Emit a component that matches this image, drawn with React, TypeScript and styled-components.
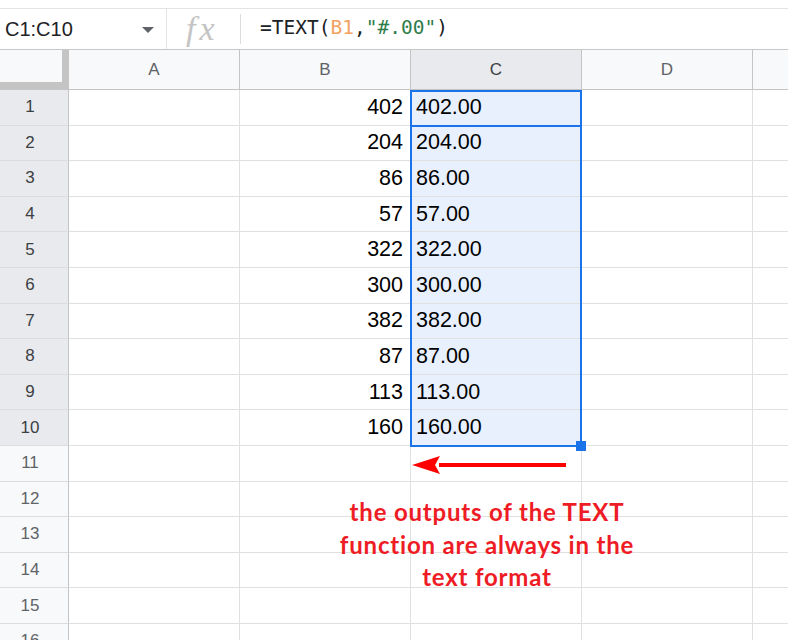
import React from 'react';
import styled, { createGlobalStyle } from 'styled-components';

const GlobalStyle = createGlobalStyle`
    html, body {
        margin: 0;
        padding: 0;
        background: #ffffff;
    }
    * {
        box-sizing: border-box;
    }
`;

const COL_W = 171;
const HEAD_W = 69;
const HEAD_H = 40;
const ROW_H = 35.6;

const Page = styled.div`
    width: 788px;
    height: 640px;
    overflow: hidden;
    display: flex;
    flex-direction: column;
    font-family: "Liberation Sans", Arial, sans-serif;
    color: #202124;
`;

const TopStrip = styled.div`
    height: 9px;
    flex: none;
    border-bottom: 1px solid #e3e3e3;
`;

const FormulaBar = styled.div`
    height: 41px;
    flex: none;
    display: flex;
    align-items: center;
    border-bottom: 1px solid #c7c7c7;
`;

const NameBox = styled.div`
    width: 167px;
    height: 100%;
    display: flex;
    align-items: center;
    justify-content: space-between;
    padding: 0 12px 0 5px;
    border-right: 1px solid #e3e3e3;
    font-size: 20px;
    color: #202124;
`;

const Caret = styled.span`
    width: 0;
    height: 0;
    border-left: 6px solid transparent;
    border-right: 6px solid transparent;
    border-top: 6px solid #5f6368;
    margin-top: 2px;
`;

const FxBox = styled.div`
    width: 74px;
    height: 30px;
    display: flex;
    align-items: center;
    padding-left: 19px;
    border-right: 1px solid #dadce0;
    font-family: "Liberation Serif", "Times New Roman", serif;
    font-style: italic;
    font-size: 34px;
    color: #c4c4c4;
    letter-spacing: 4px;
`;

const FormulaText = styled.div`
    padding-left: 19px;
    font-family: "DejaVu Sans Mono", monospace;
    font-size: 19.5px;
    color: #202124;
    white-space: pre;
    margin-top: -3px;
`;

const Tok = styled.span<{ $kind?: 'ref' | 'str' }>`
    color: ${(p) => (p.$kind === 'ref' ? '#f2a25f' : p.$kind === 'str' ? '#2f7d4a' : '#202124')};
`;

const Sheet = styled.div`
    position: relative;
    flex: none;
    display: grid;
    grid-template-columns: ${HEAD_W}px repeat(5, ${COL_W}px);
    grid-template-rows: ${HEAD_H}px repeat(16, ${ROW_H}px);
`;

const Corner = styled.div`
    background: #f8f9fa;
    border-right: 7px solid #c4c4c4;
    border-bottom: 8px solid #c4c4c4;
`;

const ColHeader = styled.div<{ $selected?: boolean }>`
    display: flex;
    align-items: center;
    justify-content: center;
    background: ${(p) => (p.$selected ? '#e8eaed' : '#f8f9fa')};
    border-right: 1px solid #c4c4c4;
    border-bottom: 1px solid #c4c4c4;
    font-size: 17px;
    color: ${(p) => (p.$selected ? '#3c4043' : '#5f6368')};
`;

const RowHeader = styled.div<{ $selected?: boolean }>`
    display: flex;
    align-items: center;
    justify-content: center;
    padding-right: 8px;
    background: ${(p) => (p.$selected ? '#e8eaed' : '#f8f9fa')};
    border-right: 1px solid #c4c4c4;
    border-bottom: 1px solid #dcdcdc;
    font-size: 17px;
    color: ${(p) => (p.$selected ? '#3c4043' : '#5f6368')};
`;

const Cell = styled.div<{ $align?: 'left' | 'right'; $selected?: boolean }>`
    display: flex;
    align-items: center;
    justify-content: ${(p) => (p.$align === 'right' ? 'flex-end' : 'flex-start')};
    padding: 0 7px 0 5px;
    background: ${(p) => (p.$selected ? '#e8f0fe' : '#ffffff')};
    border-right: 1px solid #e0e0e0;
    border-bottom: 1px solid #e0e0e0;
    font-size: 21.5px;
    color: #000000;
`;

const RangeBox = styled.div`
    position: absolute;
    left: ${HEAD_W + COL_W * 2 - 1}px;
    top: ${HEAD_H}px;
    width: ${COL_W + 1}px;
    height: ${ROW_H * 10 + 1}px;
    border: 2px solid #1a73e8;
    pointer-events: none;
`;

const ActiveCell = styled.div`
    height: ${ROW_H + 1}px;
    margin: -2px;
    border: 2px solid #1a73e8;
`;

const FillHandle = styled.div`
    position: absolute;
    right: -6px;
    bottom: -6px;
    width: 10px;
    height: 10px;
    background: #1a73e8;
`;

const Arrow = styled.svg`
    position: absolute;
    left: 409px;
    top: 403px;
    pointer-events: none;
`;

const Note = styled.div`
    position: absolute;
    left: 287px;
    top: 446px;
    width: 400px;
    text-align: center;
    font-family: Lato, "Liberation Sans", sans-serif;
    font-weight: 700;
    font-size: 24px;
    letter-spacing: 0.8px;
    line-height: 32.5px;
    color: #ee1c25;
`;

// the fifth column sits past the right edge, its letter is never visible
const columns = ['A', 'B', 'C', 'D', ''];
const values = [402, 204, 86, 57, 322, 300, 382, 87, 113, 160];

export default function App() {
    const rows = Array.from({ length: 16 }, (_, i) => i + 1);

    return (
        <Page>
            <GlobalStyle />
            <TopStrip />
            <FormulaBar>
                <NameBox>
                    <span>C1:C10</span>
                    <Caret />
                </NameBox>
                <FxBox>fx</FxBox>
                <FormulaText>
                    <Tok>=TEXT(</Tok>
                    <Tok $kind="ref">B1</Tok>
                    <Tok>,</Tok>
                    <Tok $kind="str">"#.00"</Tok>
                    <Tok>)</Tok>
                </FormulaText>
            </FormulaBar>
            <Sheet>
                <Corner />
                {columns.map((c, i) => (
                    <ColHeader key={i} $selected={c === 'C'}>{c}</ColHeader>
                ))}
                {rows.map((r) => {
                    const v = values[r - 1];
                    const inRange = r <= 10;
                    return (
                        <React.Fragment key={r}>
                            <RowHeader $selected={inRange}>{r}</RowHeader>
                            <Cell />
                            <Cell $align="right">{v}</Cell>
                            <Cell $selected={inRange}>{v !== undefined ? v.toFixed(2) : ''}</Cell>
                            <Cell />
                            <Cell />
                        </React.Fragment>
                    );
                })}
                <RangeBox>
                    <ActiveCell />
                    <FillHandle />
                </RangeBox>
                <Arrow width="162" height="24" viewBox="0 0 162 24">
                    <path d="M30 10 L157 10 L157 14 L30 14 Z" fill="#ff0000" />
                    <path d="M3 12 L31 3 L26 12 L31 21 Z" fill="#ff0000" />
                </Arrow>
                <Note>
                    the outputs of the TEXT
                    <br />
                    function are always in the
                    <br />
                    text format
                </Note>
            </Sheet>
        </Page>
    );
}
